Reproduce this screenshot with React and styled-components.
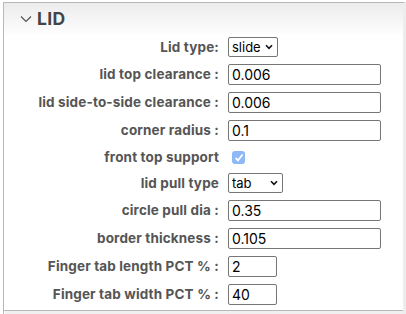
import React from 'react';
import styled, {createGlobalStyle} from 'styled-components';

const Global = createGlobalStyle`
    html, body {
        margin: 0;
        padding: 0;
        background: #ffffff;
        font-family: Inter, "Liberation Sans", sans-serif;
    }
`;

const Page = styled.div`
    padding: 2px 0 0 3px;
    width: 406px;
    height: 314px;
    box-sizing: border-box;
    overflow: hidden;
`;

const Panel = styled.div`
    width: 399px;
    border-top: 1px solid #b8b8b8;
    border-left: 1px solid #b8b8b8;
    border-right: 3px solid #ededed;
`;

const Header = styled.div`
    display: flex;
    align-items: center;
    gap: 5px;
    height: 31px;
    padding-left: 16px;
    background: linear-gradient(#ececec, #fdfdfd);
`;

const Title = styled.span`
    font-size: 17.5px;
    font-weight: 700;
    color: #444;
    letter-spacing: 0.3px;
`;

const Form = styled.div`
    display: grid;
    grid-template-columns: 215px 1fr;
    column-gap: 9px;
    padding-bottom: 2px;
    border-bottom: 1px solid #b8b8b8;
`;

const Label = styled.label`
    height: ${p => p.$h}px;
    display: flex;
    align-items: center;
    justify-content: flex-end;
    font-size: 13.5px;
    font-weight: 700;
    letter-spacing: 0.15px;
    color: #555;
    white-space: nowrap;
`;

const Cell = styled.div`
    height: ${p => p.$h}px;
    display: flex;
    align-items: center;
`;

const TextInput = styled.input`
    box-sizing: border-box;
    width: ${p => p.$w}px;
    height: 21px;
    padding: 1px 3px 0;
    border: 1px solid #767676;
    border-radius: 2px;
    font-family: Inter, "Liberation Sans", sans-serif;
    font-size: 14px;
    color: #000;
    outline: none;
`;

const SelectWrap = styled.div`
    position: relative;
    display: inline-flex;
`;

const Select = styled.select`
    appearance: none;
    box-sizing: border-box;
    width: ${p => p.$w}px;
    height: 20px;
    padding: 0 0 0 3px;
    border: 1px solid #767676;
    border-radius: 2px;
    background: #fff;
    font-family: Inter, "Liberation Sans", sans-serif;
    font-size: 13px;
    color: #000;
    outline: none;
`;

const Caret = styled.svg`
    position: absolute;
    right: 5px;
    top: 7px;
    pointer-events: none;
`;

const Check = styled.span`
    width: 13px;
    height: 13px;
    margin-left: 4px;
    margin-top: 1px;
    border-radius: 3px;
    background: #8fb8f7;
    display: flex;
    align-items: center;
    justify-content: center;
`;

const Next = styled.div`
    height: 6px;
    margin-left: 1px;
    background: #f0f0f0;
`;

const Chevron = () => (
    <svg width="12" height="8" viewBox="0 0 12 8">
        <path d="M1 1.5 L6 6.5 L11 1.5" fill="none" stroke="#555" strokeWidth="1.2" />
    </svg>
);

const fields = [
    {label: 'Lid type:', kind: 'select', value: 'slide', options: ['slide', 'snap'], w: 50},
    {label: 'lid top clearance :', kind: 'text', value: '0.006', w: 153},
    {label: 'lid side-to-side clearance :', kind: 'text', value: '0.006', w: 153},
    {label: 'corner radius :', kind: 'text', value: '0.1', w: 153},
    {label: 'front top support', kind: 'check'},
    {label: 'lid pull type', kind: 'select', value: 'tab', options: ['tab', 'circle'], w: 55},
    {label: 'circle pull dia :', kind: 'text', value: '0.35', w: 153},
    {label: 'border thickness :', kind: 'text', value: '0.105', w: 153},
    {label: 'Finger tab length PCT % :', kind: 'text', value: '2', w: 49},
    {label: 'Finger tab width PCT % :', kind: 'text', value: '40', w: 49},
];

function Control({f}) {
    if (f.kind === 'select') {
        return (
            <SelectWrap>
                <Select $w={f.w} defaultValue={f.value}>
                    {f.options.map(o => <option key={o}>{o}</option>)}
                </Select>
                <Caret width="8" height="6" viewBox="0 0 8 6">
                    <path d="M1 1.2 L4 4.3 L7 1.2" fill="none" stroke="#111" strokeWidth="1.6" />
                </Caret>
            </SelectWrap>
        );
    }
    if (f.kind === 'check') {
        return (
            <Check>
                <svg width="10" height="9" viewBox="0 0 10 9">
                    <path d="M1.5 4.8 L4 7.3 L8.6 1.5" fill="none" stroke="#fff" strokeWidth="1.8" />
                </svg>
            </Check>
        );
    }
    return <TextInput $w={f.w} defaultValue={f.value} />;
}

export default function App() {
    return (
        <Page>
            <Global />
            <Panel>
                <Header>
                    <Chevron />
                    <Title>LID</Title>
                </Header>
                <Form>
                    {fields.map(f => {
                        const h = f.kind === 'text' ? 28 : 26;
                        return (
                            <React.Fragment key={f.label}>
                                <Label $h={h}>{f.label}</Label>
                                <Cell $h={h}><Control f={f} /></Cell>
                            </React.Fragment>
                        );
                    })}
                </Form>
                <Next />
            </Panel>
        </Page>
    );
}
